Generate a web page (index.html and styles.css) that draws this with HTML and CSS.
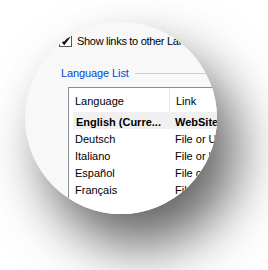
FILE: index.html
```html
<!DOCTYPE html>
<html lang="en">
<head>
    <meta charset="UTF-8">
    <title>Language List</title>
    <link rel="stylesheet" href="styles.css">
</head>
<body>
    <div class="stage">
        <div class="lens">
            <div class="pane">
                <label class="check-row">
                    <span class="checkbox">
                        <svg width="11" height="11" viewBox="0 0 11 11"><path d="M1.5 5.5 L4.2 8.5 L9.5 1.5" fill="none" stroke="#111" stroke-width="2.2"/></svg>
                    </span>
                    <span class="check-label">Show links to other Language versions</span>
                </label>

                <div class="group-title">
                    <span>Language List</span>
                    <span class="group-line"></span>
                </div>

                <div class="listview">
                    <div class="lv-row lv-header">
                        <div class="col-lang">Language</div>
                        <div class="col-link">Link</div>
                    </div>
                    <div class="lv-row selected">
                        <div class="col-lang">English (Curre...</div>
                        <div class="col-link">WebSite</div>
                    </div>
                    <div class="lv-row">
                        <div class="col-lang">Deutsch</div>
                        <div class="col-link">File or URL</div>
                    </div>
                    <div class="lv-row">
                        <div class="col-lang">Italiano</div>
                        <div class="col-link">File or URL</div>
                    </div>
                    <div class="lv-row">
                        <div class="col-lang">Español</div>
                        <div class="col-link">File or URL</div>
                    </div>
                    <div class="lv-row">
                        <div class="col-lang">Français</div>
                        <div class="col-link">File or URL</div>
                    </div>
                </div>
            </div>
        </div>
    </div>
</body>
</html>
```

FILE: styles.css
```css
body { margin: 0; background: #fff; font-family: Tahoma, "Liberation Sans", Arial, sans-serif; font-size: 11px; color: #000; }
.stage { height: 270px; padding: 22px 0 0 25px; box-sizing: border-box; overflow: hidden; }

/* magnifier circle */
.lens {
    width: 192px;
    height: 192px;
    border-radius: 50%;
    overflow: hidden;
    background: #f8f8f8;
    box-shadow: 20px 32px 56px rgba(0,0,0,0.62);
}
.pane {
    padding: 12px 0 0 34px;
    width: 300px;
}

.check-row { display: flex; align-items: center; gap: 5px; height: 13px; white-space: nowrap; }
.checkbox {
    width: 11px;
    height: 11px;
    border: 1px solid #555;
    background: #fff;
    display: flex;
    align-items: center;
    justify-content: center;
}
.check-label { color: #000; letter-spacing: -0.3px; padding-top: 1px; }

.group-title {
    display: flex;
    align-items: center;
    gap: 6px;
    margin: 19px 0 0 2px;
    color: #0046d5;
    height: 14px;
    letter-spacing: -0.1px;
}
.group-line { flex: 1; height: 1px; background: #d0d0bf; margin-top: 1px; }

.listview {
    margin: 7px 0 0 9px;
    border: 1px solid #8a8f96;
    background: #fff;
    height: 200px;
}
.lv-row { display: flex; height: 17px; line-height: 20px; white-space: nowrap; }
.lv-header { height: 24px; line-height: 26px; }
.lv-header .col-lang { border-right: 1px solid #e5e5e5; }
.selected { background: #f0f0f0; font-weight: bold; margin-left: 4px; }
.col-lang { width: 94px; padding-left: 6px; }
.selected .col-lang { width: 93px; padding-left: 3px; }
.col-link { padding-left: 6px; }
```
